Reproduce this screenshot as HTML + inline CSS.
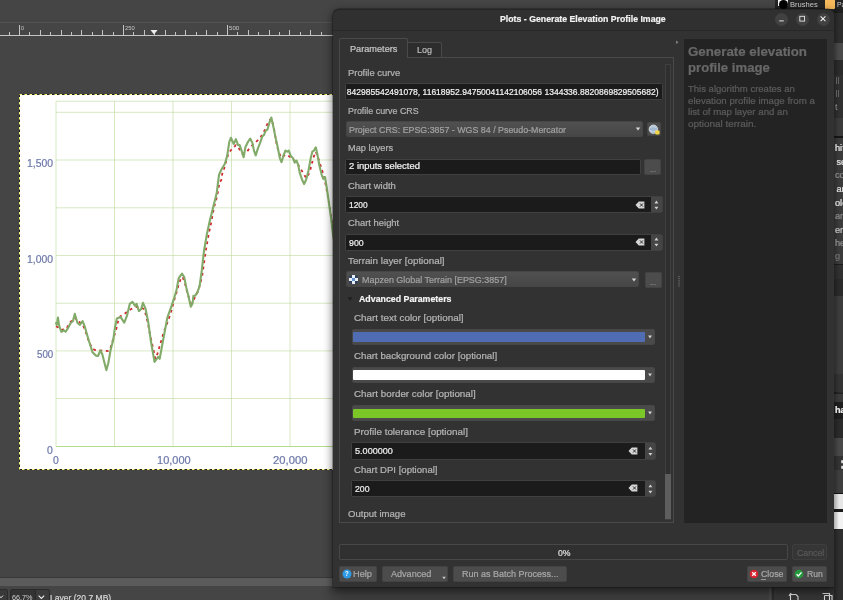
<!DOCTYPE html>
<html><head><meta charset="utf-8"><title>Plots - Generate Elevation Profile Image</title><style>
html,body{margin:0;padding:0}
body{width:843px;height:600px;overflow:hidden;background:#454545;position:relative;font-family:'Liberation Sans',sans-serif}
#gimp{will-change:transform;position:absolute;left:0;top:0;width:843px;height:600px;overflow:hidden}
#dlg{will-change:transform;position:absolute;left:333px;top:9px;width:500.5px;height:577.9px;background:#323232;border-radius:6px 6px 0 0;box-shadow:0 3px 9px 1px rgba(0,0,0,0.5),0 0 0 0.6px rgba(0,0,0,0.45);overflow:visible}
#strip{will-change:transform;position:absolute;left:0;top:0;width:843px;height:600px;overflow:hidden;clip-path:inset(8.5px 0 0 834px)}
.t{-webkit-text-stroke:0.22px currentColor;position:absolute;white-space:nowrap;transform-origin:0 50%;display:block}
</style></head><body>
<div id="gimp">
<div style="position:absolute;left:0;top:22px;width:333px;height:1px;background:#525252"></div>
<div style="position:absolute;left:0;top:35px;width:333px;height:1px;background:#c4c4c4"></div>
<svg style="position:absolute;left:0;top:0" width="333" height="40"><rect x="9" y="32" width="1" height="3" fill="#c4c4c4"/><rect x="19" y="25" width="1" height="10" fill="#c4c4c4"/><rect x="29" y="32" width="1" height="3" fill="#c4c4c4"/><rect x="40" y="30" width="1" height="5" fill="#c4c4c4"/><rect x="50" y="32" width="1" height="3" fill="#c4c4c4"/><rect x="61" y="30" width="1" height="5" fill="#c4c4c4"/><rect x="71" y="32" width="1" height="3" fill="#c4c4c4"/><rect x="81" y="30" width="1" height="5" fill="#c4c4c4"/><rect x="92" y="32" width="1" height="3" fill="#c4c4c4"/><rect x="102" y="30" width="1" height="5" fill="#c4c4c4"/><rect x="113" y="32" width="1" height="3" fill="#c4c4c4"/><rect x="123" y="25" width="1" height="10" fill="#c4c4c4"/><rect x="133" y="32" width="1" height="3" fill="#c4c4c4"/><rect x="144" y="30" width="1" height="5" fill="#c4c4c4"/><rect x="154" y="32" width="1" height="3" fill="#c4c4c4"/><rect x="165" y="30" width="1" height="5" fill="#c4c4c4"/><rect x="175" y="32" width="1" height="3" fill="#c4c4c4"/><rect x="185" y="30" width="1" height="5" fill="#c4c4c4"/><rect x="196" y="32" width="1" height="3" fill="#c4c4c4"/><rect x="206" y="30" width="1" height="5" fill="#c4c4c4"/><rect x="217" y="32" width="1" height="3" fill="#c4c4c4"/><rect x="227" y="25" width="1" height="10" fill="#c4c4c4"/><rect x="237" y="32" width="1" height="3" fill="#c4c4c4"/><rect x="248" y="30" width="1" height="5" fill="#c4c4c4"/><rect x="258" y="32" width="1" height="3" fill="#c4c4c4"/><rect x="269" y="30" width="1" height="5" fill="#c4c4c4"/><rect x="279" y="32" width="1" height="3" fill="#c4c4c4"/><rect x="289" y="30" width="1" height="5" fill="#c4c4c4"/><rect x="300" y="32" width="1" height="3" fill="#c4c4c4"/><rect x="310" y="30" width="1" height="5" fill="#c4c4c4"/><rect x="321" y="32" width="1" height="3" fill="#c4c4c4"/><path d="M150.5,30 L157.5,30 L154,34.5 Z" fill="#eee"/></svg>
<span class="t" style="left:21.3px;top:25.0px;font-size:6px;line-height:7.2px;color:#c8c8c8;font-weight:400;transform:scaleX(0.8972);-webkit-text-stroke:0;">0</span>
<span class="t" style="left:125.3px;top:25.0px;font-size:6px;line-height:7.2px;color:#c8c8c8;font-weight:400;transform:scaleX(0.9685);-webkit-text-stroke:0;">250</span>
<span class="t" style="left:229.3px;top:25.0px;font-size:6px;line-height:7.2px;color:#c8c8c8;font-weight:400;transform:scaleX(1.0184);-webkit-text-stroke:0;">500</span>
<div style="position:absolute;left:19px;top:94px;width:330px;height:376px;background:#fff;outline:1px dashed #f4f06a;outline-offset:-1px;border:0"></div>
<svg style="position:absolute;left:0;top:0" width="340" height="480"><rect x="19.5" y="94.5" width="330" height="375" fill="none" stroke="#222" stroke-width="1"/><rect x="19.5" y="94.5" width="330" height="375" fill="none" stroke="#fbf67a" stroke-width="1" stroke-dasharray="2.5 2.5"/></svg>
<svg style="position:absolute;left:0;top:0" width="350" height="480"><g stroke="#bcd99a" stroke-width="0.6" fill="none"><line x1="56" y1="101.2" x2="350" y2="101.2"/><line x1="56" y1="112.3" x2="350" y2="112.3"/><line x1="56" y1="160.0" x2="350" y2="160.0"/><line x1="56" y1="207.8" x2="350" y2="207.8"/><line x1="56" y1="255.5" x2="350" y2="255.5"/><line x1="56" y1="303.2" x2="350" y2="303.2"/><line x1="56" y1="350.9" x2="350" y2="350.9"/><line x1="56" y1="398.5" x2="350" y2="398.5"/><line x1="56" y1="446.5" x2="350" y2="446.5"/><line x1="56.0" y1="101.2" x2="56.0" y2="446.5"/><line x1="114.5" y1="101.2" x2="114.5" y2="446.5"/><line x1="173.0" y1="101.2" x2="173.0" y2="446.5"/><line x1="231.5" y1="101.2" x2="231.5" y2="446.5"/><line x1="290.0" y1="101.2" x2="290.0" y2="446.5"/><line x1="348.5" y1="101.2" x2="348.5" y2="446.5"/></g><line x1="56" y1="446.5" x2="350" y2="446.5" stroke="#b4dc8c" stroke-width="1"/><path d="M56.1,326.3 L58.3,327.6 L61.0,330.0 L63.8,329.4 L66.5,328.9 L69.3,323.0 L71.1,321.5 L74.8,317.5 L77.5,321.2 L82.6,323.9 L85.8,332.2 L89.4,343.2 L93.1,349.0 L94.9,350.0 L108.7,351.1 L110.5,347.8 L113.3,338.6 L116.0,330.3 L117.8,322.1 L120.6,316.0 L123.3,314.8 L128.9,310.5 L130.7,309.3 L136.2,306.9 L142.6,308.3 L144.4,309.3 L148.1,323.9 L149.9,334.0 L151.8,342.3 L153.6,350.5 L155.4,358.8 L157.3,354.2 L160.0,345.0 L163.7,332.2 L168.3,320.3 L171.0,312.0 L173.2,303.8 L175.6,295.1 L177.4,290.0 L178.0,286.9 L180.9,278.1 L182.7,277.0 L185.3,284.7 L187.5,293.5 L190.8,303.4 L194.1,299.0 L198.5,290.2 L202.2,275.9 L203.6,266.0 L204.7,258.3 L206.2,248.4 L208.9,233.0 L211.1,223.1 L213.9,207.7 L216.1,200.0 L218.3,190.2 L219.4,182.5 L221.2,180.3 L222.3,173.7 L223.4,171.5 L226.0,161.6 L228.7,152.8 L231.5,149.5 L233.7,147.3 L235.9,145.1 L237.5,146.2 L242.5,153.9 L246.9,151.7 L249.1,148.9 L253.5,144.0 L255.7,142.2 L259.0,139.2 L263.4,133.0 L267.8,123.1 L270.0,119.8 L271.6,118.7 L274.0,128.6 L276.6,144.0 L278.8,152.8 L281.5,157.7 L284.3,155.5 L286.5,154.6 L292.0,158.3 L297.5,163.8 L301.9,170.9 L303.5,173.7 L306.3,178.1 L309.6,172.6 L311.8,163.8 L314.0,156.1 L315.8,151.7 L318.0,157.2 L320.2,164.3 L322.8,172.6 L325.0,181.4 L327.2,192.4 L329.4,205.6 L331.6,219.9 L333.8,236.4" fill="none" stroke="#cf2a2e" stroke-width="1.8" stroke-dasharray="2.8 3.6" stroke-linejoin="round"/><path d="M56.1,323.0 L56.8,324.8 L57.9,317.5 L59.2,325.8 L61.4,331.8 L63.8,330.3 L65.6,331.8 L68.3,327.6 L70.7,323.0 L72.9,321.2 L74.8,313.8 L77.5,323.0 L79.9,324.8 L82.6,321.2 L84.8,326.7 L88.5,339.5 L92.5,352.3 L95.8,355.6 L98.0,356.0 L100.4,350.5 L102.3,354.2 L106.3,370.1 L108.3,363.3 L110.5,350.5 L113.3,339.5 L115.1,326.7 L116.9,318.4 L120.6,317.1 L124.3,322.6 L127.0,315.7 L129.8,303.8 L132.5,301.9 L134.9,305.6 L136.6,303.8 L138.9,311.1 L141.1,309.3 L143.0,302.8 L145.4,308.3 L148.1,321.2 L150.9,341.3 L154.5,361.9 L158.2,356.9 L159.7,358.8 L161.9,346.8 L164.6,332.2 L167.4,317.5 L171.0,307.4 L173.8,299.2 L176.5,290.0 L178.7,278.1 L182.0,273.7 L184.2,277.0 L186.4,288.0 L188.6,296.8 L190.8,306.7 L192.6,303.4 L193.4,295.7 L195.2,295.7 L197.4,292.4 L199.6,285.8 L201.8,270.4 L204.0,250.6 L206.7,235.2 L209.5,222.0 L212.8,208.8 L215.0,200.0 L216.8,192.4 L219.0,174.8 L221.6,169.3 L224.9,163.8 L227.1,156.1 L229.3,141.8 L230.9,137.8 L233.7,144.0 L235.9,139.2 L238.1,145.1 L239.7,145.1 L241.9,151.7 L243.6,157.2 L245.4,147.3 L248.0,141.8 L250.2,138.5 L252.4,142.9 L254.0,150.6 L255.7,155.5 L257.9,148.4 L260.1,142.9 L262.3,136.3 L263.9,135.2 L265.6,130.8 L267.4,129.7 L269.6,122.0 L271.3,117.6 L273.3,126.4 L275.5,137.4 L277.7,147.3 L279.9,158.3 L281.5,162.1 L283.7,155.0 L285.4,150.6 L287.2,151.7 L288.7,150.6 L290.9,156.1 L293.1,158.3 L294.7,162.7 L296.4,160.5 L298.2,164.9 L299.7,172.6 L301.9,179.2 L304.1,184.1 L306.3,179.2 L308.5,170.4 L310.7,158.3 L312.3,151.7 L314.0,150.6 L315.8,147.3 L317.3,153.9 L319.5,166.0 L321.7,174.8 L323.3,178.8 L325.0,177.0 L326.8,188.0 L329.0,203.4 L331.2,218.8 L332.7,232.0 L336.0,254.0 L339.3,276.0" fill="none" stroke="#82ab69" stroke-width="2.1" stroke-linejoin="round" stroke-linecap="round"/></svg>
<span class="t" style="left:26.8px;top:157.4px;font-size:10.5px;line-height:12.6px;color:#6d78a8;font-weight:400;transform:scaleX(0.9893);">1,500</span>
<span class="t" style="left:26.8px;top:252.9px;font-size:10.5px;line-height:12.6px;color:#6d78a8;font-weight:400;transform:scaleX(0.9893);">1,000</span>
<span class="t" style="left:36.5px;top:348.3px;font-size:10.5px;line-height:12.6px;color:#6d78a8;font-weight:400;transform:scaleX(0.9298);">500</span>
<span class="t" style="left:47px;top:443.9px;font-size:10.5px;line-height:12.6px;color:#6d78a8;font-weight:400;transform:scaleX(0.9925);">0</span>
<span class="t" style="left:53.4px;top:453.5px;font-size:10.5px;line-height:12.6px;color:#6d78a8;font-weight:400;transform:scaleX(0.9925);">0</span>
<span class="t" style="left:156.6px;top:453.5px;font-size:10.5px;line-height:12.6px;color:#6d78a8;font-weight:400;transform:scaleX(1.0490);">10,000</span>
<span class="t" style="left:272.9px;top:453.5px;font-size:10.5px;line-height:12.6px;color:#6d78a8;font-weight:400;transform:scaleX(1.0708);">20,000</span>
<div style="position:absolute;left:0;top:576.6px;width:340px;height:1.4px;background:#383838"></div>
<div style="position:absolute;left:0;top:578px;width:340px;height:7.8px;background:#5b5b5b"></div>
<div style="position:absolute;left:0;top:586px;width:843px;height:14px;background:#454545"></div>
<div style="position:absolute;left:-2px;top:589px;width:8px;height:14px;background:#393939;border:1px solid #2c2c2c;border-radius:2px"></div>
<div style="position:absolute;left:9.5px;top:589px;width:25px;height:14px;background:#333;border:1px solid #2a2a2a;border-radius:2px 0 0 2px"></div>
<div style="position:absolute;left:35px;top:589px;width:12.5px;height:14px;background:#3c3c3c;border:1px solid #2a2a2a;border-radius:0 2px 2px 0"></div>
<svg style="position:absolute;left:0;top:590px" width="60" height="10"><path d="M-1,5.5 L1,7.8 L3,5.5" fill="none" stroke="#ddd" stroke-width="1"/><path d="M38.6,5.6 L41.4,8.4 L44.2,5.6" fill="none" stroke="#eee" stroke-width="1.1"/></svg>
<span class="t" style="left:11.5px;top:593.88px;font-size:7.2px;line-height:8.64px;color:#d0d0d0;font-weight:400;transform:scaleX(1.0054);-webkit-text-stroke:0;">66.7%</span>
<span class="t" style="left:49.8px;top:591.96px;font-size:9.4px;line-height:11.28px;color:#d8d8d8;font-weight:400;transform:scaleX(0.9105);">Layer (20.7 MB)</span>
<div style="position:absolute;left:774.5px;top:0;width:70px;height:9px;background:#242424"></div>
<div style="position:absolute;left:777.8px;top:-1px;width:10.4px;height:7.2px;background:#f4f4f4"></div>
<div style="position:absolute;left:778.8px;top:-0.5px;width:9.2px;height:9.2px;border-radius:50%;background:#000"></div>
<span class="t" style="left:790.2px;top:0.04px;font-size:7.6px;line-height:9.12px;color:#cfcfcf;font-weight:400;transform:scaleX(0.9979);-webkit-text-stroke:0;">Brushes</span>
<div style="position:absolute;left:825px;top:0;width:10px;height:8.5px;background:#f6b95b"></div>
<span class="t" style="left:837px;top:0.04px;font-size:7.6px;line-height:9.12px;color:#cfcfcf;font-weight:400;transform:scaleX(0.9035);-webkit-text-stroke:0;">Pa</span>
<div style="position:absolute;left:826px;top:9px;width:17px;height:591px;background:#2d2d2d"></div>
<div style="position:absolute;left:772px;top:586px;width:1px;height:14px;background:#2c2c2c"></div>
<div style="position:absolute;left:322px;top:586px;width:450px;height:14px;background:linear-gradient(90deg,rgba(58,58,58,0),#3c3c3c 22px)"></div>
<div style="position:absolute;left:768.5px;top:586px;width:2px;height:14px;background:#454545"></div>
<div style="position:absolute;left:772px;top:586px;width:71px;height:14px;background:#343434"></div>
<div style="position:absolute;left:772px;top:586px;width:1.5px;height:14px;background:#2a2a2a"></div>
<svg style="position:absolute;left:785px;top:590px" width="58" height="10"><path d="M5.5,4.5 h5.5 l2,2 v4 M5.5,4.5 v6 M4,6 l1.5,-2.5 l2,1.5" fill="none" stroke="#d8d8d8" stroke-width="1.1"/><path d="M37.5,3.5 h7 v7 M39.5,5.5 h7.5 v5 M39.5,5.5 v5" fill="none" stroke="#d8d8d8" stroke-width="1.1"/></svg>
</div>
<div id="dlg">
<div style="position:absolute;left:0;top:0;width:500.5px;height:21px;box-sizing:border-box;background:#303030;border-top:0.8px solid #262626;border-radius:6px 6px 0 0"></div>
<div style="position:absolute;left:0;top:20.6px;width:500.5px;height:1.2px;background:#282828"></div>
<span class="t" style="left:167.10000000000002px;top:4.32px;font-size:9.8px;line-height:11.76px;color:#f2f2f2;font-weight:700;transform:scaleX(0.8925);">Plots - Generate Elevation Profile Image</span>
<div style="position:absolute;left:442.1px;top:3.5px;width:13px;height:13px;border-radius:50%;background:#414141"></div>
<div style="position:absolute;left:462.7px;top:3.5px;width:13px;height:13px;border-radius:50%;background:#414141"></div>
<div style="position:absolute;left:483.5px;top:3.5px;width:13px;height:13px;border-radius:50%;background:#414141"></div>
<svg style="position:absolute;left:440px;top:0" width="60" height="21"><rect x="6.2" y="11.4" width="4.6" height="1" fill="#e0e0e0"/><rect x="26.8" y="7.3" width="4.8" height="4.8" fill="none" stroke="#e8e8e8" stroke-width="0.9"/><path d="M47.6,7.4 l4.8,4.8 m0,-4.8 l-4.8,4.8" stroke="#f0f0f0" stroke-width="1.05" fill="none"/></svg>
<div style="position:absolute;left:6.0px;top:48.0px;width:335.0px;height:466.0px;background:transparent;box-sizing:border-box;border:1px solid #4a4a4a;border-radius:0px;"></div>
<div style="position:absolute;left:6.0px;top:29.2px;width:68.8px;height:19.8px;background:#323232;box-sizing:border-box;border:1px solid #4a4a4a;border-radius:2px;border-bottom:0;border-radius:2px 2px 0 0"></div>
<div style="position:absolute;left:74.6px;top:33.1px;width:34.4px;height:15.4px;background:#2d2d2d;box-sizing:border-box;border:1px solid #4a4a4a;border-radius:2px;border-bottom:0;border-left:0;border-radius:0 2px 0 0"></div>
<span class="t" style="left:16.600000000000023px;top:33.94px;font-size:9.6px;line-height:11.52px;color:#c6c6c6;font-weight:400;transform:scaleX(0.9558);">Parameters</span>
<span class="t" style="left:84px;top:35.34px;font-size:9.6px;line-height:11.52px;color:#bdbdbd;font-weight:400;transform:scaleX(0.9366);">Log</span>
<div style="position:absolute;left:331.5px;top:55.0px;width:6.5px;height:455.5px;background:#2f2f2f;box-sizing:border-box;border:1px solid #3f3f3f;border-radius:0px;"></div>
<div style="position:absolute;left:332.0px;top:465.0px;width:5.5px;height:45.0px;background:#5e5e5e;box-sizing:border-box;border-radius:0px;"></div>
<span class="t" style="left:14.800000000000011px;top:58.04px;font-size:9.6px;line-height:11.52px;color:#b4b4b4;font-weight:400;transform:scaleX(0.9788);">Profile curve</span>
<div style="position:absolute;left:12.4px;top:74.4px;width:317.2px;height:16.7px;background:#1b1b1b;box-sizing:border-box;border:1px solid #404040;border-radius:1.5px;"></div>
<div style="position:absolute;left:14px;top:75.5px;width:314px;height:14.5px;overflow:hidden">
<span class="t" style="left:-5.199999999999989px;top:1.34px;font-size:9.6px;line-height:11.52px;color:#f4f4f4;font-weight:400;transform:scaleX(0.8879);">9842985542491078, 11618952.94750041142106056 1344336.8820869829505682)</span>
</div>
<span class="t" style="left:14.800000000000011px;top:95.54px;font-size:9.6px;line-height:11.52px;color:#b4b4b4;font-weight:400;transform:scaleX(0.9272);">Profile curve CRS</span>
<div style="position:absolute;left:13.0px;top:111.9px;width:297.0px;height:15.9px;background:#4b4b4b;box-sizing:border-box;border:1px solid #464646;border-radius:2px;background:linear-gradient(#505050,#464646);"></div>
<span class="t" style="left:15.5px;top:115.04px;font-size:9.6px;line-height:11.52px;color:#a2a2a2;font-weight:400;transform:scaleX(0.9229);">Project CRS: EPSG:3857 - WGS 84 / Pseudo-Mercator</span>
<svg style="position:absolute;left:300.8px;top:116.3px" width="8" height="8"><path d="M1.7999999999999998,2.4 h4.4 l-2.2,3.2 Z" fill="#d8d8d8"/></svg>
<div style="position:absolute;left:314.0px;top:113.0px;width:14.2px;height:13.8px;background:#4c4c4c;box-sizing:border-box;border:1px solid #434343;border-radius:1.5px;"></div>
<svg style="position:absolute;left:315px;top:114.5px" width="13" height="12"><circle cx="5.4" cy="5.2" r="4.2" fill="#9fb7cf" stroke="#e6e6e6" stroke-width="0.8"/><path d="M2,3.5 q3,-2 6,0 M1.5,6.5 q4,2 8,0" stroke="#dfe7ee" stroke-width="0.7" fill="none"/><rect x="7.2" y="6.6" width="4.4" height="3.8" rx="0.8" fill="#f2d544"/></svg>
<span class="t" style="left:14.800000000000011px;top:132.74px;font-size:9.6px;line-height:11.52px;color:#b4b4b4;font-weight:400;transform:scaleX(0.9612);">Map layers</span>
<div style="position:absolute;left:12.4px;top:149.7px;width:295.2px;height:15.9px;background:#1b1b1b;box-sizing:border-box;border:1px solid #404040;border-radius:1.5px;"></div>
<span class="t" style="left:15.5px;top:151.44px;font-size:9.6px;line-height:11.52px;color:#f2f2f2;font-weight:400;transform:scaleX(0.9847);">2 inputs selected</span>
<div style="position:absolute;left:311.3px;top:150.0px;width:17.2px;height:16.0px;background:#4c4c4c;box-sizing:border-box;border:1px solid #434343;border-radius:1.5px;"></div>
<span class="t" style="left:316.79999999999995px;top:154.24px;font-size:9.6px;line-height:11.52px;color:#8a8a8a;font-weight:400;transform:scaleX(0.7750);">...</span>
<span class="t" style="left:14.800000000000011px;top:170.94px;font-size:9.6px;line-height:11.52px;color:#b4b4b4;font-weight:400;transform:scaleX(0.9870);">Chart width</span>
<div style="position:absolute;left:12.4px;top:187.2px;width:317.2px;height:17.2px;background:#1b1b1b;box-sizing:border-box;border:1px solid #404040;border-radius:1.5px;"></div>
<div style="position:absolute;left:318.0px;top:188.3px;width:10.5px;height:15.0px;background:#454545;box-sizing:border-box;border-radius:0px;"></div>
<svg style="position:absolute;left:318.0px;top:187.8px" width="11" height="16.0"><path d="M3.4,6.4 h4 l-2,-2.8 Z M3.4,9.8 h4 l-2,2.8 Z" fill="#d0d0d0"/></svg>
<svg style="position:absolute;left:300.8px;top:190.5px" width="12" height="10"><path d="M1.5,5 L4.8,1.6 H10.4 V8.4 H4.8 Z" fill="#d6d6d6"/><path d="M6,3.4 l3,3.2 m0,-3.2 l-3,3.2" stroke="#333" stroke-width="1" fill="none"/></svg>
<span class="t" style="left:15.5px;top:190.14px;font-size:9.6px;line-height:11.52px;color:#f2f2f2;font-weight:400;transform:scaleX(0.8761);">1200</span>
<span class="t" style="left:14.800000000000011px;top:208.34px;font-size:9.6px;line-height:11.52px;color:#b4b4b4;font-weight:400;transform:scaleX(0.9796);">Chart height</span>
<div style="position:absolute;left:12.4px;top:224.7px;width:317.2px;height:17.3px;background:#1b1b1b;box-sizing:border-box;border:1px solid #404040;border-radius:1.5px;"></div>
<div style="position:absolute;left:318.0px;top:225.8px;width:10.5px;height:15.1px;background:#454545;box-sizing:border-box;border-radius:0px;"></div>
<svg style="position:absolute;left:318.0px;top:225.3px" width="11" height="16.1"><path d="M3.4,6.4 h4 l-2,-2.8 Z M3.4,9.8 h4 l-2,2.8 Z" fill="#d0d0d0"/></svg>
<svg style="position:absolute;left:300.8px;top:228.1px" width="12" height="10"><path d="M1.5,5 L4.8,1.6 H10.4 V8.4 H4.8 Z" fill="#d6d6d6"/><path d="M6,3.4 l3,3.2 m0,-3.2 l-3,3.2" stroke="#333" stroke-width="1" fill="none"/></svg>
<span class="t" style="left:15.5px;top:227.69px;font-size:9.6px;line-height:11.52px;color:#f2f2f2;font-weight:400;transform:scaleX(0.9179);">900</span>
<span class="t" style="left:14.800000000000011px;top:245.74px;font-size:9.6px;line-height:11.52px;color:#b4b4b4;font-weight:400;transform:scaleX(1.0234);">Terrain layer [optional]</span>
<div style="position:absolute;left:13.0px;top:262.1px;width:293.3px;height:16.4px;background:#4b4b4b;box-sizing:border-box;border:1px solid #464646;border-radius:2px;background:linear-gradient(#505050,#464646);"></div>
<svg style="position:absolute;left:15.600000000000023px;top:266px" width="10" height="10"><g fill="#e8eef6"><rect x="0" y="3" width="3" height="3"/><rect x="3" y="0" width="3" height="3"/><rect x="6" y="3" width="3" height="3"/><rect x="3" y="6" width="3" height="3"/></g><rect x="3" y="3" width="3" height="3" fill="#5f8fd0"/><g fill="#2c3f5c"><rect x="0.6" y="0.6" width="2.4" height="2.4"/><rect x="6" y="0.6" width="2.4" height="2.4"/><rect x="0.6" y="6" width="2.4" height="2.4"/><rect x="6" y="6" width="2.4" height="2.4"/></g></svg>
<span class="t" style="left:29px;top:264.84px;font-size:9.6px;line-height:11.52px;color:#a2a2a2;font-weight:400;transform:scaleX(0.9335);">Mapzen Global Terrain [EPSG:3857]</span>
<svg style="position:absolute;left:297.0px;top:266.6px" width="8" height="8"><path d="M1.7999999999999998,2.4 h4.4 l-2.2,3.2 Z" fill="#d8d8d8"/></svg>
<div style="position:absolute;left:311.5px;top:263.0px;width:17.0px;height:16.0px;background:#4c4c4c;box-sizing:border-box;border:1px solid #434343;border-radius:1.5px;"></div>
<span class="t" style="left:316.79999999999995px;top:267.24px;font-size:9.6px;line-height:11.52px;color:#8a8a8a;font-weight:400;transform:scaleX(0.7750);">...</span>
<svg style="position:absolute;left:13.2px;top:286.3px" width="8" height="8"><path d="M1.5,2.3 h5 l-2.5,3.4 Z" fill="#1e1e1e"/></svg>
<span class="t" style="left:25.5px;top:284.14px;font-size:9.6px;line-height:11.52px;color:#f4f4f4;font-weight:700;transform:scaleX(0.9177);">Advanced Parameters</span>
<span class="t" style="left:20.69999999999999px;top:302.74px;font-size:9.6px;line-height:11.52px;color:#b4b4b4;font-weight:400;transform:scaleX(1.0276);">Chart text color [optional]</span>
<div style="position:absolute;left:18.8px;top:320.1px;width:303.6px;height:15.7px;background:#4a4a4a;box-sizing:border-box;border:1px solid #464646;border-radius:2px;"></div>
<div style="position:absolute;left:20.0px;top:323.3px;width:291.5px;height:9.6px;background:#506cb2;box-sizing:border-box;border-radius:1px;"></div>
<svg style="position:absolute;left:313.4px;top:324.1px" width="8" height="8"><path d="M2.1,2.5 h3.8 l-1.9,3 Z" fill="#d8d8d8"/></svg>
<span class="t" style="left:20.69999999999999px;top:340.74px;font-size:9.6px;line-height:11.52px;color:#b4b4b4;font-weight:400;transform:scaleX(1.0125);">Chart background color [optional]</span>
<div style="position:absolute;left:18.8px;top:358.2px;width:303.6px;height:15.7px;background:#4a4a4a;box-sizing:border-box;border:1px solid #464646;border-radius:2px;"></div>
<div style="position:absolute;left:20.0px;top:361.4px;width:291.5px;height:9.6px;background:#ffffff;box-sizing:border-box;border-radius:1px;"></div>
<svg style="position:absolute;left:313.4px;top:362.2px" width="8" height="8"><path d="M2.1,2.5 h3.8 l-1.9,3 Z" fill="#d8d8d8"/></svg>
<span class="t" style="left:20.69999999999999px;top:378.74px;font-size:9.6px;line-height:11.52px;color:#b4b4b4;font-weight:400;transform:scaleX(1.0234);">Chart border color [optional]</span>
<div style="position:absolute;left:18.8px;top:396.3px;width:303.6px;height:15.7px;background:#4a4a4a;box-sizing:border-box;border:1px solid #464646;border-radius:2px;"></div>
<div style="position:absolute;left:20.0px;top:399.5px;width:291.5px;height:9.6px;background:#7cc728;box-sizing:border-box;border-radius:1px;"></div>
<svg style="position:absolute;left:313.4px;top:400.3px" width="8" height="8"><path d="M2.1,2.5 h3.8 l-1.9,3 Z" fill="#d8d8d8"/></svg>
<span class="t" style="left:20.69999999999999px;top:416.74px;font-size:9.6px;line-height:11.52px;color:#b4b4b4;font-weight:400;transform:scaleX(1.0267);">Profile tolerance [optional]</span>
<div style="position:absolute;left:17.9px;top:433.2px;width:305.2px;height:17.6px;background:#1b1b1b;box-sizing:border-box;border:1px solid #404040;border-radius:1.5px;"></div>
<div style="position:absolute;left:311.5px;top:434.3px;width:10.5px;height:15.4px;background:#454545;box-sizing:border-box;border-radius:0px;"></div>
<svg style="position:absolute;left:311.5px;top:433.8px" width="11" height="16.4"><path d="M3.4,6.6 h4 l-2,-2.8 Z M3.4,10.0 h4 l-2,2.8 Z" fill="#d0d0d0"/></svg>
<svg style="position:absolute;left:294.3px;top:436.7px" width="12" height="10"><path d="M1.5,5 L4.8,1.6 H10.4 V8.4 H4.8 Z" fill="#d6d6d6"/><path d="M6,3.4 l3,3.2 m0,-3.2 l-3,3.2" stroke="#333" stroke-width="1" fill="none"/></svg>
<span class="t" style="left:21.5px;top:436.34px;font-size:9.6px;line-height:11.52px;color:#f2f2f2;font-weight:400;transform:scaleX(0.9471);">5.000000</span>
<span class="t" style="left:20.69999999999999px;top:454.74px;font-size:9.6px;line-height:11.52px;color:#b4b4b4;font-weight:400;transform:scaleX(0.9972);">Chart DPI [optional]</span>
<div style="position:absolute;left:17.9px;top:471.0px;width:305.2px;height:17.0px;background:#1b1b1b;box-sizing:border-box;border:1px solid #404040;border-radius:1.5px;"></div>
<div style="position:absolute;left:311.5px;top:472.1px;width:10.5px;height:14.8px;background:#454545;box-sizing:border-box;border-radius:0px;"></div>
<svg style="position:absolute;left:311.5px;top:471.6px" width="11" height="15.8"><path d="M3.4,6.3 h4 l-2,-2.8 Z M3.4,9.7 h4 l-2,2.8 Z" fill="#d0d0d0"/></svg>
<svg style="position:absolute;left:294.3px;top:474.2px" width="12" height="10"><path d="M1.5,5 L4.8,1.6 H10.4 V8.4 H4.8 Z" fill="#d6d6d6"/><path d="M6,3.4 l3,3.2 m0,-3.2 l-3,3.2" stroke="#333" stroke-width="1" fill="none"/></svg>
<span class="t" style="left:21.5px;top:473.84px;font-size:9.6px;line-height:11.52px;color:#f2f2f2;font-weight:400;transform:scaleX(0.9116);">200</span>
<span class="t" style="left:14.5px;top:498.74px;font-size:9.6px;line-height:11.52px;color:#b4b4b4;font-weight:400;transform:scaleX(0.9981);">Output image</span>
<svg style="position:absolute;left:342px;top:29px" width="8" height="260"><path d="M1.2,2.4 l2.2,1.8 l-2.2,1.8 Z" fill="#8a8a8a"/><rect x="3.4" y="238.0" width="1.2" height="1" fill="#777"/><rect x="3.4" y="239.9" width="1.2" height="1" fill="#777"/><rect x="3.4" y="241.8" width="1.2" height="1" fill="#777"/><rect x="3.4" y="243.7" width="1.2" height="1" fill="#777"/><rect x="3.4" y="245.6" width="1.2" height="1" fill="#777"/><rect x="3.4" y="247.5" width="1.2" height="1" fill="#777"/></svg>
<div style="position:absolute;left:351.0px;top:30.0px;width:143.0px;height:483.5px;background:#232323;box-sizing:border-box;border-radius:0px;"></div>
<span class="t" style="left:355.20000000000005px;top:34.92px;font-size:13.3px;line-height:15.96px;color:#686868;font-weight:700;transform:scaleX(1.0001);">Generate elevation</span>
<span class="t" style="left:355.20000000000005px;top:50.52px;font-size:13.3px;line-height:15.96px;color:#686868;font-weight:700;transform:scaleX(0.9883);">profile image</span>
<span class="t" style="left:355.20000000000005px;top:74.38px;font-size:9.7px;line-height:11.64px;color:#5c5c5c;font-weight:400;transform:scaleX(0.9819);">This algorithm creates an</span>
<span class="t" style="left:355.20000000000005px;top:85.88px;font-size:9.7px;line-height:11.64px;color:#5c5c5c;font-weight:400;transform:scaleX(0.9978);">elevation profile image from a</span>
<span class="t" style="left:355.20000000000005px;top:97.28px;font-size:9.7px;line-height:11.64px;color:#5c5c5c;font-weight:400;transform:scaleX(0.9963);">list of map layer and an</span>
<span class="t" style="left:355.20000000000005px;top:108.58px;font-size:9.7px;line-height:11.64px;color:#5c5c5c;font-weight:400;transform:scaleX(1.0227);">optional terrain.</span>
<div style="position:absolute;left:6.3px;top:535.2px;width:448.7px;height:16.2px;background:#303030;box-sizing:border-box;border:1px solid #474747;border-radius:2px;"></div>
<span class="t" style="left:224.5px;top:537.94px;font-size:9.6px;line-height:11.52px;color:#e0e0e0;font-weight:400;transform:scaleX(0.9009);">0%</span>
<div style="position:absolute;left:459.2px;top:534.8px;width:35.1px;height:16.4px;background:#363636;box-sizing:border-box;border:1px solid #3e3e3e;border-radius:2px;"></div>
<span class="t" style="left:463.5px;top:537.64px;font-size:9.6px;line-height:11.52px;color:#595959;font-weight:400;transform:scaleX(0.9105);">Cancel</span>
<div style="position:absolute;left:6.3px;top:557.0px;width:37.9px;height:16.2px;background:#4c4c4c;box-sizing:border-box;border:1px solid #434343;border-radius:1.5px;"></div>
<svg style="position:absolute;left:8.699999999999989px;top:560.2px" width="10" height="10"><circle cx="5" cy="5" r="4.5" fill="#2f9be6"/></svg>
<span class="t" style="left:11.899999999999977px;top:560.3px;font-size:7.5px;line-height:9.0px;color:#fff;font-weight:700;transform:scaleX(0.8054);-webkit-text-stroke:0;">?</span>
<span class="t" style="left:20.399999999999977px;top:559.14px;font-size:9.6px;line-height:11.52px;color:#a9a9a9;font-weight:400;transform:scaleX(0.9628);">Help</span>
<div style="position:absolute;left:49.0px;top:557.0px;width:66.3px;height:16.2px;background:#4c4c4c;box-sizing:border-box;border:1px solid #434343;border-radius:1.5px;"></div>
<span class="t" style="left:57.89999999999998px;top:558.94px;font-size:9.6px;line-height:11.52px;color:#a9a9a9;font-weight:400;transform:scaleX(0.9444);">Advanced</span>
<svg style="position:absolute;left:107.0px;top:565.0px" width="8" height="8"><path d="M2.2,2.7 h3.6 l-1.8,2.6 Z" fill="#c8c8c8"/></svg>
<div style="position:absolute;left:120.2px;top:557.0px;width:114.2px;height:16.2px;background:#4c4c4c;box-sizing:border-box;border:1px solid #434343;border-radius:1.5px;"></div>
<span class="t" style="left:129.10000000000002px;top:558.94px;font-size:9.6px;line-height:11.52px;color:#a9a9a9;font-weight:400;transform:scaleX(0.9366);">Run as Batch Process...</span>
<div style="position:absolute;left:414.0px;top:557.0px;width:40.2px;height:16.2px;background:#4c4c4c;box-sizing:border-box;border:1px solid #434343;border-radius:1.5px;"></div>
<svg style="position:absolute;left:416.4px;top:559.8px" width="10" height="10"><circle cx="5" cy="5" r="4.3" fill="#d8232e"/><path d="M3.2,3.2 l3.6,3.6 m0,-3.6 l-3.6,3.6" stroke="#fff" stroke-width="1.3"/></svg>
<span class="t" style="left:427.9px;top:558.94px;font-size:9.6px;line-height:11.52px;color:#a9a9a9;font-weight:400;transform:scaleX(0.9131);text-decoration:none">Close</span>
<div style="position:absolute;left:427.9px;top:570px;width:5px;height:0.7px;background:#999"></div>
<div style="position:absolute;left:459.4px;top:557.0px;width:34.4px;height:16.2px;background:#4c4c4c;box-sizing:border-box;border:1px solid #434343;border-radius:1.5px;"></div>
<svg style="position:absolute;left:461.4px;top:559.8px" width="10" height="10"><circle cx="5" cy="5" r="4.3" fill="#249a3c"/><path d="M2.6,5.2 l1.7,1.8 l3.2,-3.6" stroke="#fff" stroke-width="1.3" fill="none"/></svg>
<span class="t" style="left:473.6px;top:558.94px;font-size:9.6px;line-height:11.52px;color:#a9a9a9;font-weight:400;transform:scaleX(0.8916);">Run</span>
</div>
<div id="strip"><div style="position:absolute;left:834px;top:8.5px;width:9px;height:4.5px;background:#1f1f1f"></div><div style="position:absolute;left:834px;top:13px;width:9px;height:30.0px;background:#2d2d2d"></div><div style="position:absolute;left:834px;top:43px;width:9px;height:17.0px;background:#4a4a4a"></div><div style="position:absolute;left:834px;top:60px;width:9px;height:15.0px;background:#2b2b2b"></div><div style="position:absolute;left:834px;top:75px;width:9px;height:43.0px;background:#303030"></div><div style="position:absolute;left:834px;top:118px;width:9px;height:17.5px;background:#3b3b3b"></div><div style="position:absolute;left:834px;top:135.5px;width:9px;height:2.8px;background:#161616"></div><div style="position:absolute;left:834px;top:138.3px;width:9px;height:125.7px;background:#3b3b3b"></div><div style="position:absolute;left:834px;top:264px;width:9px;height:1.2px;background:#1c1c1c"></div><div style="position:absolute;left:834px;top:265.2px;width:9px;height:13.5px;background:#303030"></div><div style="position:absolute;left:834px;top:278.7px;width:9px;height:17.3px;background:#2a2a2a"></div><div style="position:absolute;left:834px;top:296px;width:9px;height:77.7px;background:#3c3c3c"></div><div style="position:absolute;left:834px;top:373.7px;width:9px;height:18.8px;background:#333"></div><div style="position:absolute;left:834px;top:392.5px;width:9px;height:1.5px;background:#222"></div><div style="position:absolute;left:834px;top:394px;width:9px;height:8.3px;background:#3a3a3a"></div><div style="position:absolute;left:834px;top:402.3px;width:9px;height:16.7px;background:#1e1e1e"></div><div style="position:absolute;left:834px;top:419px;width:9px;height:19.3px;background:#2a2a2a"></div><div style="position:absolute;left:834px;top:438.3px;width:9px;height:17.4px;background:#484848"></div><div style="position:absolute;left:834px;top:455.7px;width:9px;height:14.3px;background:#333"></div><div style="position:absolute;left:834px;top:470px;width:9px;height:23.4px;background:#3e3e3e"></div><div style="position:absolute;left:834px;top:493.4px;width:9px;height:0.9px;background:#111"></div><div style="position:absolute;left:834px;top:494.3px;width:9px;height:14.4px;background:#e6e6e6"></div><div style="position:absolute;left:834px;top:508.7px;width:9px;height:3.1px;background:#1a1a1a"></div><div style="position:absolute;left:834px;top:511.8px;width:9px;height:17.7px;background:#f2f2f2"></div><div style="position:absolute;left:834px;top:529.5px;width:9px;height:70.5px;background:#2e2e2e"></div><div style="position:absolute;left:834px;top:0px;width:9px;height:600.0px;background:linear-gradient(90deg,rgba(0,0,0,0.28),rgba(0,0,0,0) 5px)"></div><span class="t" style="left:835.5px;top:75.78px;font-size:9.2px;line-height:11.04px;color:#6e6e6e;font-weight:400;-webkit-text-stroke:0;">ll</span><span class="t" style="left:835.5px;top:89.08px;font-size:9.2px;line-height:11.04px;color:#6e6e6e;font-weight:400;-webkit-text-stroke:0;">ll</span><span class="t" style="left:835px;top:102.48px;font-size:9.2px;line-height:11.04px;color:#8a8a8a;font-weight:400;-webkit-text-stroke:0;">t</span><span class="t" style="left:835px;top:143.48px;font-size:9.2px;line-height:11.04px;color:#e8e8e8;font-weight:400;">hif</span><span class="t" style="left:836.5px;top:156.98px;font-size:9.2px;line-height:11.04px;color:#e0e0e0;font-weight:400;">se</span><span class="t" style="left:835px;top:170.48px;font-size:9.2px;line-height:11.04px;color:#8c8c8c;font-weight:400;">co</span><span class="t" style="left:836.5px;top:184.48px;font-size:9.2px;line-height:11.04px;color:#e0e0e0;font-weight:400;">ar</span><span class="t" style="left:835px;top:198.48px;font-size:9.2px;line-height:11.04px;color:#e0e0e0;font-weight:400;">olo</span><span class="t" style="left:835px;top:211.48px;font-size:9.2px;line-height:11.04px;color:#8a8a8a;font-weight:400;">ane</span><span class="t" style="left:835px;top:224.98px;font-size:9.2px;line-height:11.04px;color:#c0c0c0;font-weight:400;">erg</span><span class="t" style="left:835px;top:237.98px;font-size:9.2px;line-height:11.04px;color:#909090;font-weight:400;">hei</span><span class="t" style="left:835px;top:251.48px;font-size:9.2px;line-height:11.04px;color:#707070;font-weight:400;">g</span><span class="t" style="left:835px;top:404.98px;font-size:9.2px;line-height:11.04px;color:#e8e8e8;font-weight:700;">har</span><svg style="position:absolute;left:836px;top:456px" width="8" height="14"><rect x="5.2" y="4.2" width="3" height="3" fill="#ddd"/><rect x="5.2" y="9.8" width="3" height="3" fill="#ddd"/></svg></div>
</body></html>
